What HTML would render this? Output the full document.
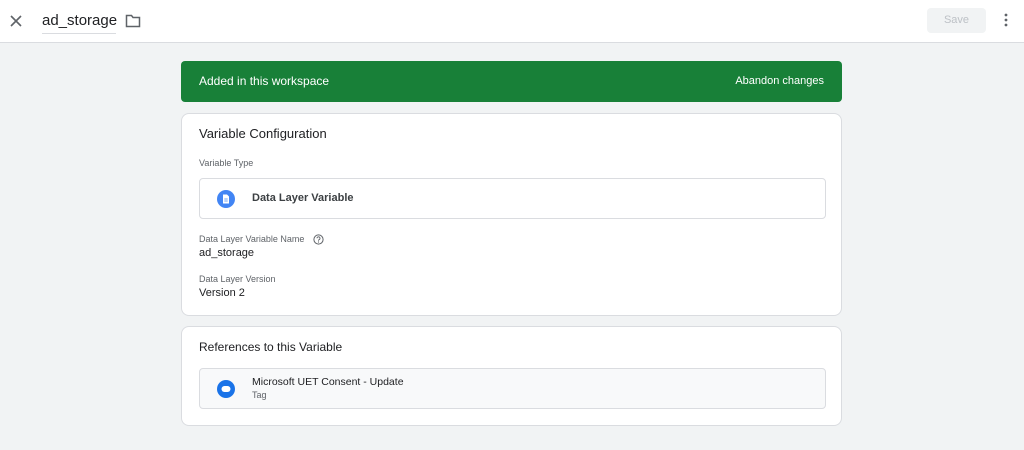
<!DOCTYPE html>
<html><head><style>
*{box-sizing:border-box;margin:0;padding:0}
body{width:1024px;height:450px;background:#f1f3f4;font-family:"Liberation Sans",sans-serif;color:#202124;position:relative;overflow:hidden}
.top{position:absolute;left:0;top:0;width:1024px;height:43px;background:#fff;border-bottom:1px solid #dadce0}
.card{position:absolute;left:181px;width:661px;background:#fff;border:1px solid #dadce0;border-radius:8px}
.abs{position:absolute}
</style></head><body>
<div class="top">
<svg class="abs" style="left:9px;top:14px" width="14" height="14" viewBox="0 0 14 14"><path d="M2 2L12 12M12 2L2 12" stroke="#5f6368" stroke-width="1.6"/></svg>
<div class="abs" style="left:42px;top:12px;font-size:15px;color:#202124">ad_storage</div>
<div class="abs" style="left:42px;top:33px;width:74px;height:1px;background:#dadce0"></div>
<svg class="abs" style="left:125px;top:14px" width="16" height="14" viewBox="0 0 16 14"><path d="M1.5 1.5h5l1.5 2h6.5v9h-13z" fill="none" stroke="#5f6368" stroke-width="1.5"/></svg>
<div class="abs" style="left:927px;top:8px;width:59px;height:25px;background:#f1f3f4;border-radius:4px;color:#bdc1c6;font-size:11px;text-align:center;line-height:25px">Save</div>
<svg class="abs" style="left:1004px;top:13px" width="4" height="14"><circle cx="2" cy="2" r="1.4" fill="#5f6368"/><circle cx="2" cy="7" r="1.4" fill="#5f6368"/><circle cx="2" cy="12" r="1.4" fill="#5f6368"/></svg>
</div>
<div class="abs" style="left:181px;top:61px;width:661px;height:41px;background:#188038;border-radius:4px;color:#fff;font-size:12px">
<div class="abs" style="left:18px;top:13px">Added in this workspace</div>
<div class="abs" style="right:18px;top:14px;font-size:11px">Abandon changes</div>
</div>
<div class="card" style="top:113px;height:203px">
<div class="abs" style="left:17px;top:12px;font-size:13px">Variable Configuration</div>
<div class="abs" style="left:17px;top:44px;font-size:9px;color:#5f6368">Variable Type</div>
<div class="abs" style="left:17px;top:64px;width:627px;height:41px;border:1px solid #dadce0;border-radius:4px">
<svg class="abs" style="left:17px;top:11px" width="18" height="18" viewBox="0 0 18 18"><circle cx="9" cy="9" r="9" fill="#4285f4"/><path d="M6 4.5h4l2 2v7H6z" fill="#fff"/><path d="M7.3 9h3.4M7.3 11h3.4" stroke="#4285f4" stroke-width=".8"/></svg>
<div class="abs" style="left:52px;top:13px;font-size:11px;font-weight:bold;color:#3c4043">Data Layer Variable</div>
</div>
<div class="abs" style="left:17px;top:120px;font-size:9px;color:#5f6368">Data Layer Variable Name</div>
<svg class="abs" style="left:131px;top:120px" width="11" height="11" viewBox="0 0 11 11"><circle cx="5.5" cy="5.5" r="4.6" fill="none" stroke="#5f6368" stroke-width="1"/><path d="M4 4.3a1.5 1.5 0 1 1 2 1.4c-.5.2-.5.6-.5 1" fill="none" stroke="#5f6368" stroke-width=".9"/><circle cx="5.5" cy="8" r=".6" fill="#5f6368"/></svg>
<div class="abs" style="left:17px;top:133px;font-size:11px">ad_storage</div>
<div class="abs" style="left:17px;top:160px;font-size:9px;color:#5f6368">Data Layer Version</div>
<div class="abs" style="left:17px;top:173px;font-size:11px">Version 2</div>
</div>
<div class="card" style="top:326px;height:100px">
<div class="abs" style="left:17px;top:13px;font-size:12px">References to this Variable</div>
<div class="abs" style="left:17px;top:41px;width:627px;height:41px;border:1px solid #dadce0;border-radius:4px;background:#f8f9fa">
<svg class="abs" style="left:17px;top:11px" width="18" height="18" viewBox="0 0 18 18"><circle cx="9" cy="9" r="9" fill="#1a73e8"/><rect x="4.5" y="6" width="9" height="6" rx="3" fill="#fff"/></svg>
<div class="abs" style="left:52px;top:7px;font-size:10.5px;color:#202124">Microsoft UET Consent - Update</div>
<div class="abs" style="left:52px;top:21px;font-size:9px;color:#5f6368">Tag</div>
</div>
</div>
</body></html>
